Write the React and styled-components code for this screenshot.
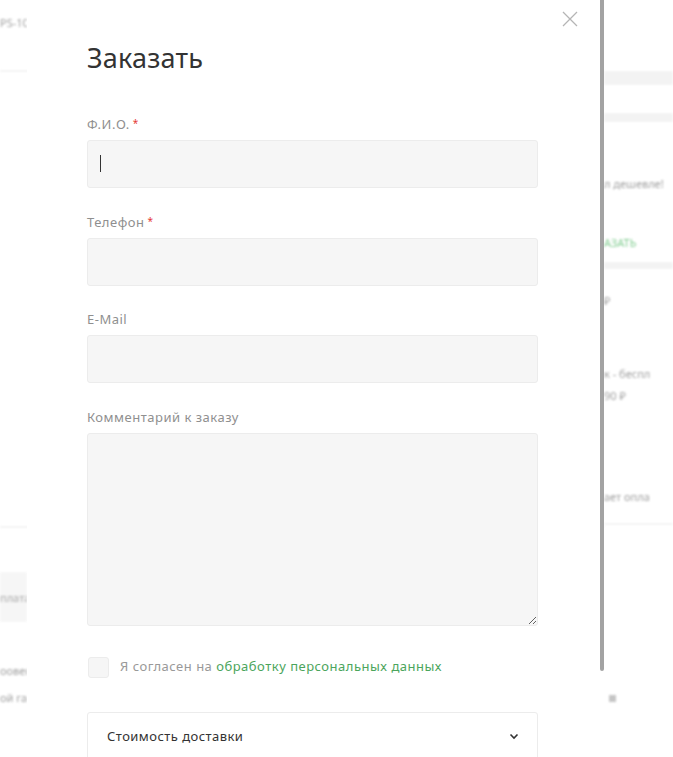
import React from "react";
import styled, { createGlobalStyle } from "styled-components";

const Global = createGlobalStyle`
  html, body { margin: 0; padding: 0; background: #fff; }
  body { font-family: "Noto Sans", "Open Sans", Arial, sans-serif; overflow: hidden; }
  * { box-sizing: border-box; }
`;

const Page = styled.div`
  position: relative;
  width: 673px;
  height: 757px;
  overflow: hidden;
  background: #fff;
`;

const Backdrop = styled.div`
  display: grid;
  grid-template-columns: 1fr 69px;
  height: 100%;
  filter: blur(1.3px);
  opacity: 0.85;
  color: #8a8a8a;
  font-size: 11px;
`;

const BgColumn = styled.div`
  display: flex;
  flex-direction: column;
  overflow: hidden;
`;

const BgText = styled.div`
  white-space: nowrap;
  overflow: hidden;
  width: ${(p) => (p.$w ? `${p.$w}px` : "auto")};
  margin-top: ${(p) => p.$mt || 0}px;
  color: ${(p) => (p.$green ? "#6cc47e" : "#8f8f8f")};
  line-height: 14px;
`;

const BgLine = styled.div`
  height: ${(p) => p.$h || 2}px;
  background: #f2f2f2;
  margin-top: ${(p) => p.$mt || 0}px;
`;

const BgBox = styled.div`
  height: 50px;
  width: 27px;
  overflow: hidden;
  background: #f5f5f5;
  margin-top: ${(p) => p.$mt || 0}px;
  display: flex;
  align-items: center;
  color: #9a9a9a;
  white-space: nowrap;
`;

const BgDot = styled.div`
  width: 7px;
  height: 7px;
  background: #bbb;
  margin: ${(p) => p.$mt || 0}px 0 0 5px;
`;

const Modal = styled.div`
  position: absolute;
  top: 0;
  left: 27px;
  width: 573px;
  height: 757px;
  background: #fff;
  padding: 40px 62px 0 60px;
  overflow: hidden;
`;

const ScrollThumb = styled.div`
  position: absolute;
  top: 0;
  left: 600px;
  width: 4px;
  height: 671px;
  background: #a3a3a3;
  border-radius: 0 0 2px 2px;
`;

const Close = styled.button`
  position: absolute;
  top: 10px;
  right: 21px;
  width: 18px;
  height: 18px;
  padding: 0;
  border: 0;
  background: none;
  cursor: pointer;
`;

const Title = styled.h2`
  margin: 0 0 40px;
  font-size: 27px;
  line-height: 36px;
  font-weight: 400;
  color: #333;
  letter-spacing: 0.2px;
`;

const Field = styled.div`
  margin-bottom: 25.5px;
`;

const Label = styled.label`
  display: block;
  height: 16px;
  font-size: 13px;
  line-height: 16px;
  letter-spacing: 0.5px;
  color: #8f8f8f;
  margin-bottom: 8px;
`;

const Star = styled.span`
  color: #e53935;
  margin-left: 3px;
  font-size: 10px;
  line-height: 0;
  vertical-align: 2px;
`;

const InputWrap = styled.div`
  position: relative;
`;

const Input = styled.input`
  display: block;
  width: 100%;
  height: 48px;
  background: #f6f6f6;
  border: 1px solid #ececec;
  border-radius: 3px;
  outline: none;
  padding: 0 13px;
  font: inherit;
  font-size: 13px;
  color: #333;
`;

const Caret = styled.span`
  position: absolute;
  left: 13px;
  top: 15px;
  width: 1px;
  height: 17px;
  background: #333;
`;

const TextArea = styled.textarea`
  display: block;
  width: 100%;
  height: 193px;
  background: #f6f6f6;
  border: 1px solid #ececec;
  border-radius: 3px;
  outline: none;
  padding: 12px 13px;
  font: inherit;
  font-size: 13px;
  resize: vertical;
`;

const Agree = styled.div`
  display: flex;
  align-items: center;
  gap: 11px;
  margin: 31px 0 34px 1px;
`;

const Box = styled.span`
  width: 21px;
  height: 21px;
  background: #f6f6f6;
  border: 1px solid #ececec;
  border-radius: 3px;
  flex: none;
`;

const AgreeText = styled.span`
  font-size: 13px;
  line-height: 16px;
  letter-spacing: 0.5px;
  color: #999;
  margin-top: -3px;
`;

const Link = styled.a`
  color: #4ba55c;
  text-decoration: none;
`;

const Accordion = styled.div`
  border: 1px solid #ececec;
  border-radius: 3px;
  height: 60px;
  display: flex;
  align-items: flex-start;
  justify-content: space-between;
  padding: 14px 18px 0 19px;
`;

const AccTitle = styled.span`
  font-size: 13px;
  line-height: 18px;
  letter-spacing: 0.45px;
  color: #333;
`;

export default function App() {
  return (
    <>
      <Global />
      <Page>
        <Backdrop>
          <BgColumn>
            <BgText $mt={16} $w={27}>PS-1000</BgText>
            <BgLine $mt={40} />
            <BgLine $mt={454} />
            <BgBox $mt={44}>плата</BgBox>
            <BgText $mt={42} $w={27}>оовещ</BgText>
            <BgText $mt={13} $w={27}>ой га</BgText>
          </BgColumn>
          <BgColumn>
            <BgLine $mt={71} $h={14} />
            <BgLine $mt={28} $h={9} />
            <BgText $mt={55}>л дешевле!</BgText>
            <BgText $mt={45} $green>АЗАТЬ</BgText>
            <BgLine $mt={12} $h={7} />
            <BgText $mt={25}>₽</BgText>
            <BgText $mt={59} $w={69}>к - беспл</BgText>
            <BgText $mt={8}>90 ₽</BgText>
            <BgText $mt={87} $w={69}>ает опла</BgText>
            <BgLine $mt={19} />
            <BgDot $mt={170} />
          </BgColumn>
        </Backdrop>

        <Modal>
          <Close aria-label="Закрыть">
            <svg width="18" height="18" viewBox="0 0 18 18">
              <path d="M2 2L16 16M16 2L2 16" stroke="#b5b5b5" strokeWidth="1.3" fill="none" />
            </svg>
          </Close>
          <Title>Заказать</Title>

          <Field>
            <Label>
              Ф.И.О.<Star>*</Star>
            </Label>
            <InputWrap>
              <Input type="text" />
              <Caret />
            </InputWrap>
          </Field>

          <Field>
            <Label>
              Телефон<Star>*</Star>
            </Label>
            <Input type="tel" />
          </Field>

          <Field>
            <Label>E-Mail</Label>
            <Input type="email" />
          </Field>

          <Field>
            <Label>Комментарий к заказу</Label>
            <TextArea />
          </Field>

          <Agree>
            <Box />
            <AgreeText>
              Я согласен на <Link href="#">обработку персональных данных</Link>
            </AgreeText>
          </Agree>

          <Accordion>
            <AccTitle>Стоимость доставки</AccTitle>
            <svg width="10" height="18" viewBox="0 0 10 18">
              <path d="M1.5 7.5L5 11L8.5 7.5" stroke="#333" strokeWidth="1.6" fill="none" />
            </svg>
          </Accordion>
        </Modal>
        <ScrollThumb />
      </Page>
    </>
  );
}
